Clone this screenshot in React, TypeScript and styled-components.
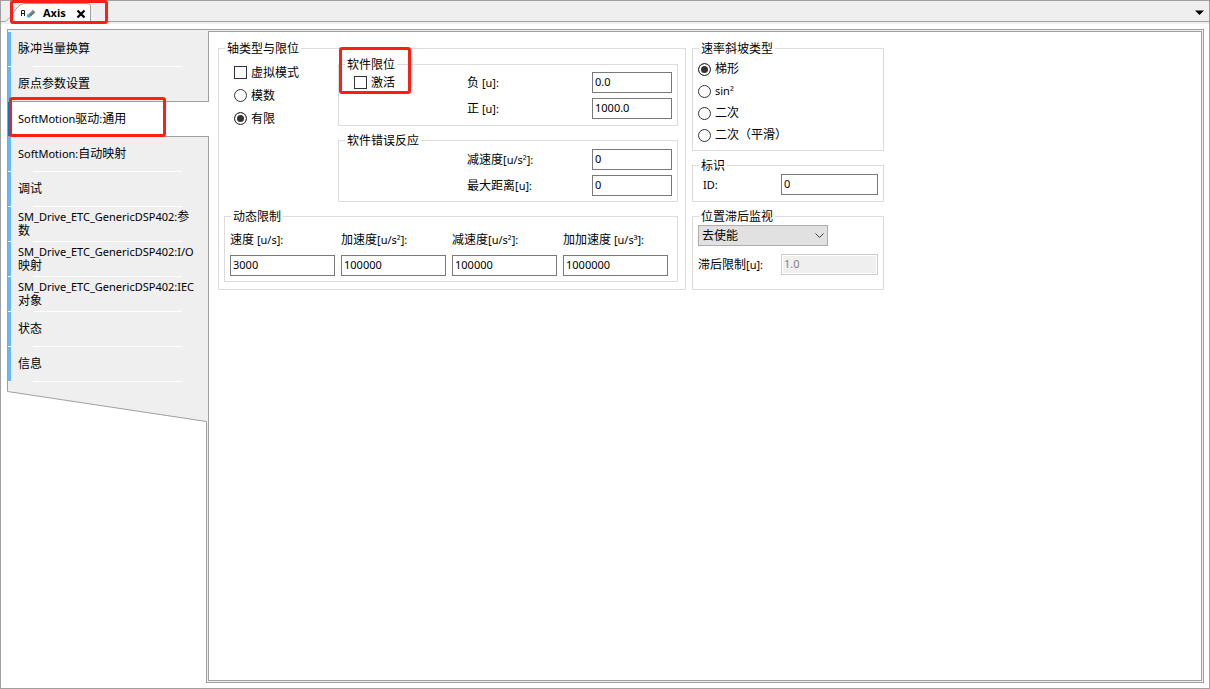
import React, { useState } from 'react';
import styled, { createGlobalStyle } from 'styled-components';

const line = '#a0a0a0';
const face = '#efefef';

const GlobalStyle = createGlobalStyle`
  *, *::before, *::after { box-sizing: border-box; }
  body {
    margin: 0;
    background: #fff;
    color: #000;
    font-family: 'Noto Sans', 'Noto Sans CJK SC', sans-serif;
    font-size: 12px;
    line-height: 16px;
  }
  button, input, select { font: inherit; color: inherit; }
`;

const Window = styled.div`
  display: flex;
  flex-direction: column;
  min-height: 100vh;
  border: 1px solid ${line};
`;

const TabBar = styled.header`
  display: flex;
  align-items: stretch;
  justify-content: space-between;
  height: 21px;
  padding: 0 5px 0 3px;
  background: ${face};
  border-bottom: 1px solid ${line};
`;

const DocumentTab = styled.div`
  position: relative;
  display: flex;
  align-items: center;
  width: 88px;
  height: 21px;
  padding: 3px 6px 0 17px;
`;

const TabShape = styled.svg`
  position: absolute;
  inset: 0;
`;

const TabIcon = styled.svg`
  position: relative;
  flex: none;
  margin-right: 7px;
`;

const TabTitle = styled.span`
  position: relative;
  flex: 1;
  font-size: 11px;
  font-weight: 700;
`;

const IconButton = styled.button`
  position: relative;
  display: flex;
  align-items: center;
  justify-content: center;
  padding: 2px 0 0;
  border: 0;
  background: none;
`;

const Callout = styled.span<{ $inset: string }>`
  position: absolute;
  inset: ${(p) => p.$inset};
  z-index: 2;
  border: 3px solid #ff1e14;
  border-radius: 3px;
  pointer-events: none;
`;

const Workspace = styled.div`
  display: flex;
  flex: 1;
  padding: 5px 5px 5px 6px;
  border-top: 2px solid ${face};
`;

const Sidebar = styled.div`
  display: flex;
  flex: none;
  flex-direction: column;
  width: 201px;
`;

const NavList = styled.nav`
  display: flex;
  flex-direction: column;
  padding-top: 2px;
  border: solid ${line};
  border-width: 1px 0 0 1px;
  background: ${face};
`;

const NavItem = styled.button<{ $selected: boolean; $ruled: boolean }>`
  position: relative;
  z-index: ${(p) => (p.$selected ? 1 : 0)};
  display: flex;
  align-items: center;
  height: 35px;
  margin-right: ${(p) => (p.$selected ? '-1px' : '0')};
  padding: 0 11px 1px 10px;
  border: 0;
  text-align: left;
  line-height: 14px;
  background:
    ${(p) =>
      p.$ruled
        ? `linear-gradient(${line}, ${line}) 0 100% / 100% 1px no-repeat`
        : 'linear-gradient(#fff, #fff) 25px 100% / 149px 1px no-repeat, linear-gradient(#fff, #fff) 0 100% / 3px 1px no-repeat'},
    linear-gradient(${(p) => (p.$selected ? '#0078d7, #0078d7' : '#66b7fb, #66b7fb')}) 0 0 / 3px 100% no-repeat,
    ${(p) => (p.$selected ? '#fff' : face)};
`;

const NavSlope = styled.svg`
  display: block;
  flex: none;
`;

const Gutter = styled.div`
  flex: 1;
  align-self: flex-end;
  width: 2px;
  border: solid ${line};
  border-width: 0 0 1px 1px;
  background: ${face};
`;

const PanelFrame = styled.div`
  display: flex;
  flex: 1;
  padding: 1px 1px 1px 0;
  border: solid ${line};
  border-width: 1px 1px 1px 0;
  background: ${face};
`;

const Panel = styled.main`
  display: flex;
  flex: 1;
  align-items: flex-start;
  gap: 6px;
  padding: 9px;
  border: 1px solid ${line};
  background: #fff;
`;

const Column = styled.div<{ $gap: number }>`
  display: flex;
  flex-direction: column;
  gap: ${(p) => p.$gap}px;
`;

const GroupFrame = styled.fieldset<{ $width?: number }>`
  min-width: 0;
  width: ${(p) => (p.$width ? `${p.$width}px` : 'auto')};
  margin: 0;
  padding: 0;
  border: 1px solid #dcdcdc;
`;

const Legend = styled.legend`
  height: 15px;
  margin-left: 6px;
  padding: 0 2px;
  line-height: 15px;
`;

const GroupBody = styled.div<{ $pad: string }>`
  padding: ${(p) => p.$pad};
`;

const Anchor = styled.div`
  position: relative;
`;

const TopRow = styled.div`
  display: grid;
  grid-template-columns: 114px 1fr;
`;

const AxisOptions = styled.div`
  display: flex;
  flex-direction: column;
  padding: 4px 0 0 10px;
`;

const Choice = styled.label<{ $height: number }>`
  display: flex;
  align-items: center;
  gap: 4px;
  height: ${(p) => p.$height}px;
`;

const Check = styled.input.attrs({ type: 'checkbox' })`
  appearance: none;
  width: 13px;
  height: 13px;
  margin: 0;
  border: 1px solid #333;
  background: #fff;
  &:checked { box-shadow: inset 0 0 0 2px #fff; background: #333; }
`;

const Radio = styled.input.attrs({ type: 'radio' })`
  appearance: none;
  width: 13px;
  height: 13px;
  margin: 0;
  border: 1px solid #333;
  border-radius: 50%;
  background: #fff;
  &:checked { box-shadow: inset 0 0 0 2px #fff; background: #333; }
`;

const LimitGrid = styled.div`
  display: grid;
  grid-template-columns: 128px 1fr 80px;
  align-items: center;
  row-gap: 5px;
`;

const ActivateCell = styled.div`
  grid-column: 1;
  padding-left: 15px;
`;

const FieldLabel = styled.label`
  grid-column: 2;
`;

const Latin = styled.span`
  font-size: 11px;
`;

const TextField = styled.input.attrs({ type: 'text' })`
  min-width: 0;
  height: 21px;
  padding: 0 2px 2px;
  border: 1px solid #7a7a7a;
  border-radius: 0;
  background: #fff;
  font-size: 11px;
  &:disabled {
    border-color: #ccc;
    background: ${face};
    box-shadow: inset 0 0 0 1px #fff;
    color: #838383;
  }
`;

const DynamicGrid = styled.div`
  display: grid;
  grid-template-columns: repeat(4, minmax(0, 1fr));
  gap: 6px;
`;

const DynamicField = styled.label`
  display: flex;
  flex-direction: column;
  gap: 7px;
`;

const SideRow = styled.div`
  display: grid;
  grid-template-columns: 1fr 97px;
  align-items: center;
`;

const SelectBox = styled.div`
  position: relative;
  width: 130px;
  height: 21px;
`;

const Select = styled.select`
  appearance: none;
  width: 100%;
  height: 100%;
  padding: 0 20px 0 3px;
  border: 1px solid #adadad;
  border-radius: 0;
  background: #e1e1e1;
`;

const SelectArrow = styled.svg`
  position: absolute;
  top: 8px;
  right: 4px;
  pointer-events: none;
`;

const navItems: { id: string; text: React.ReactNode }[] = [
  { id: 'scaling', text: '脉冲当量换算' },
  { id: 'homing', text: '原点参数设置' },
  { id: 'general', text: <><Latin>SoftMotion</Latin>驱动<Latin>:</Latin>通用</> },
  { id: 'mapping', text: <><Latin>SoftMotion:</Latin>自动映射</> },
  { id: 'debug', text: '调试' },
  { id: 'params', text: <><Latin>SM_Drive_ETC_GenericDSP402:</Latin>参数</> },
  { id: 'io', text: <><Latin>SM_Drive_ETC_GenericDSP402:I/O</Latin> 映射</> },
  { id: 'iec', text: <><Latin>SM_Drive_ETC_GenericDSP402:IEC</Latin> 对象</> },
  { id: 'state', text: '状态' },
  { id: 'info', text: '信息' },
];

const dynamicFields = [
  { name: '速度', unit: ' [u/s]:', value: '3000' },
  { name: '加速度', unit: '[u/s²]:', value: '100000' },
  { name: '减速度', unit: '[u/s²]:', value: '100000' },
  { name: '加加速度', unit: ' [u/s³]:', value: '1000000' },
];

const ramps: React.ReactNode[] = ['梯形', <Latin key="sin">sin²</Latin>, '二次', '二次（平滑）'];

interface GroupProps {
  title: string;
  pad: string;
  width?: number;
  children: React.ReactNode;
}

function Group({ title, pad, width, children }: GroupProps) {
  return (
    <GroupFrame $width={width}>
      <Legend>{title}</Legend>
      <GroupBody $pad={pad}>{children}</GroupBody>
    </GroupFrame>
  );
}

function LimitField({ id, name, unit, value }: { id: string; name: string; unit: string; value: string }) {
  return (
    <>
      <FieldLabel htmlFor={id}>{name}<Latin>{unit}</Latin></FieldLabel>
      <TextField id={id} defaultValue={value} />
    </>
  );
}

export default function App() {
  const [selected, setSelected] = useState('general');
  const current = navItems.findIndex((n) => n.id === selected);

  return (
    <>
      <GlobalStyle />
      <Window>
        <TabBar>
          <DocumentTab>
            <TabShape width="88" height="21" viewBox="0 0 88 21" aria-hidden="true">
              <path d="M0.5 20.5C6 19.5 8 12 13 7C16 3.5 18 2.5 22 2.5H84Q86.5 2.5 86.5 5V21H0.5Z" fill="#fff" />
              <path d="M0.5 20.5C6 19.5 8 12 13 7C16 3.5 18 2.5 22 2.5H84Q86.5 2.5 86.5 5V20" fill="none" stroke={line} />
            </TabShape>
            <TabIcon width="15" height="9" viewBox="0 0 15 9" aria-hidden="true">
              <path d="M0.5 7V1.5H3.5V7M0.5 4.5H3.5" fill="none" stroke="#222" />
              <path d="M8.5 6.5L13 2" stroke="#6f7276" strokeWidth="3.4" />
              <path d="M8.5 5L12.5 1.2" stroke="#b0b4b8" />
              <circle cx="7.7" cy="6.9" r="1.8" fill="#37aee6" />
            </TabIcon>
            <TabTitle>Axis</TabTitle>
            <IconButton type="button" aria-label="关闭">
              <svg width="10" height="10" viewBox="0 0 10 10" aria-hidden="true">
                <path d="M1.5 1.5L8.5 8.5M8.5 1.5L1.5 8.5" stroke="#000" strokeWidth="2.2" />
              </svg>
            </IconButton>
            <Callout $inset="-1px -16px -2px 6px" />
          </DocumentTab>
          <IconButton type="button" aria-label="文档列表">
            <svg width="9" height="5" viewBox="0 0 9 5" aria-hidden="true">
              <path d="M0 0.5H9L4.5 5Z" fill="#000" />
            </svg>
          </IconButton>
        </TabBar>

        <Workspace>
          <Sidebar>
            <NavList>
              {navItems.map((item, i) => (
                <NavItem
                  key={item.id}
                  type="button"
                  $selected={i === current}
                  $ruled={i === current || i === current - 1}
                  onClick={() => setSelected(item.id)}
                >
                  <span>{item.text}</span>
                  {item.id === 'general' && <Callout $inset="-5px 43px 0 1px" />}
                </NavItem>
              ))}
            </NavList>
            <NavSlope width="201" height="40" viewBox="0 0 201 40" aria-hidden="true">
              <path d="M0 0H201V40H199.5L0.5 9.5Z" fill={face} />
              <path d="M0.5 0V9.5L199.5 39.5V40" fill="none" stroke={line} />
            </NavSlope>
            <Gutter />
          </Sidebar>

          <PanelFrame>
            <Panel>
              <Group title="轴类型与限位" width={468} pad="1px 7px 7px 5px">
                <Column $gap={7}>
                  <TopRow>
                    <AxisOptions>
                      <Choice $height={23}><Check />虚拟模式</Choice>
                      <Choice $height={23}><Radio name="axis" />模数</Choice>
                      <Choice $height={23}><Radio name="axis" defaultChecked />有限</Choice>
                    </AxisOptions>
                    <Column $gap={7}>
                      <Anchor>
                        <Group title="软件限位" pad="0 5px 6px 0">
                          <LimitGrid>
                            <ActivateCell>
                              <Choice $height={21}><Check />激活</Choice>
                            </ActivateCell>
                            <LimitField id="neg" name="负" unit=" [u]:" value="0.0" />
                            <LimitField id="pos" name="正" unit=" [u]:" value="1000.0" />
                          </LimitGrid>
                        </Group>
                        <Callout $inset="-10px 267px 32px 1px" />
                      </Anchor>
                      <Group title="软件错误反应" pad="1px 5px 5px 0">
                        <LimitGrid>
                          <LimitField id="dec" name="减速度" unit="[u/s²]:" value="0" />
                          <LimitField id="dist" name="最大距离" unit="[u]:" value="0" />
                        </LimitGrid>
                      </Group>
                    </Column>
                  </TopRow>
                  <Group title="动态限制" pad="8px 9px 5px 5px">
                    <DynamicGrid>
                      {dynamicFields.map((f) => (
                        <DynamicField key={f.name}>
                          <span>{f.name}<Latin>{f.unit}</Latin></span>
                          <TextField defaultValue={f.value} />
                        </DynamicField>
                      ))}
                    </DynamicGrid>
                  </Group>
                </Column>
              </Group>

              <Column $gap={7}>
                <Group title="速率斜坡类型" width={192} pad="2px 5px 4px">
                  {ramps.map((text, i) => (
                    <Choice key={i} $height={22}><Radio name="ramp" defaultChecked={i === 0} />{text}</Choice>
                  ))}
                </Group>
                <Group title="标识" width={192} pad="1px 5px 6px 10px">
                  <SideRow>
                    <label htmlFor="axis-id"><Latin>ID:</Latin></label>
                    <TextField id="axis-id" defaultValue="0" />
                  </SideRow>
                </Group>
                <Group title="位置滞后监视" width={192} pad="1px 5px 14px">
                  <Column $gap={8}>
                    <SelectBox>
                      <Select aria-label="位置滞后监视" defaultValue="off">
                        <option value="off">去使能</option>
                      </Select>
                      <SelectArrow width="9" height="6" viewBox="0 0 9 6" aria-hidden="true">
                        <path d="M0.5 0.5L4.5 4.5L8.5 0.5" fill="none" stroke="#444" />
                      </SelectArrow>
                    </SelectBox>
                    <SideRow>
                      <label htmlFor="lag">滞后限制<Latin>[u]:</Latin></label>
                      <TextField id="lag" defaultValue="1.0" disabled />
                    </SideRow>
                  </Column>
                </Group>
              </Column>
            </Panel>
          </PanelFrame>
        </Workspace>
      </Window>
    </>
  );
}
